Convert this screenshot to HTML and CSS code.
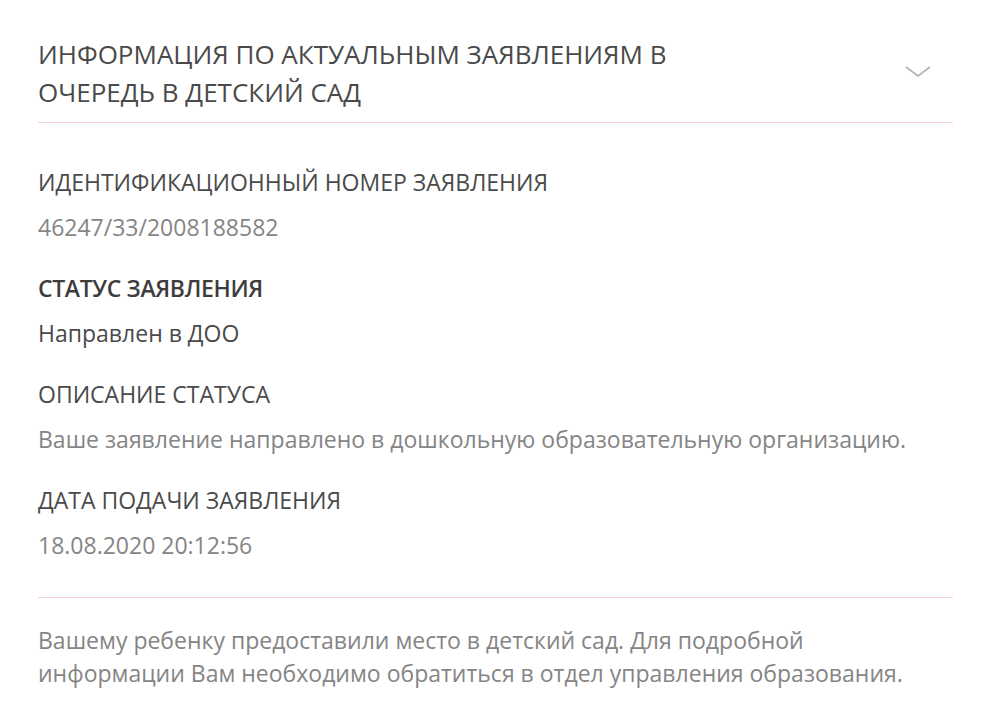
FILE: index.html
```html
<!DOCTYPE html>
<html lang="ru">
<head>
<meta charset="utf-8">
<link rel="stylesheet" href="styles.css">
</head>
<body>
<div class="card">
  <div class="header">
    <h1 class="title">ИНФОРМАЦИЯ ПО АКТУАЛЬНЫМ ЗАЯВЛЕНИЯМ В ОЧЕРЕДЬ В ДЕТСКИЙ САД</h1>
    <svg class="chevron" width="26" height="12" viewBox="0 0 26 12"><path d="M1 1 L13 10 L25 1" fill="none" stroke="#b4b4b4" stroke-width="1.6"/></svg>
  </div>
  <div class="divider"></div>
  <div class="fields">
    <div class="field">
      <div class="label">ИДЕНТИФИКАЦИОННЫЙ НОМЕР ЗАЯВЛЕНИЯ</div>
      <div class="value">46247/33/2008188582</div>
    </div>
    <div class="field">
      <div class="label strong">СТАТУС ЗАЯВЛЕНИЯ</div>
      <div class="value dark">Направлен в ДОО</div>
    </div>
    <div class="field">
      <div class="label">ОПИСАНИЕ СТАТУСА</div>
      <div class="value">Ваше заявление направлено в дошкольную образовательную организацию.</div>
    </div>
    <div class="field">
      <div class="label">ДАТА ПОДАЧИ ЗАЯВЛЕНИЯ</div>
      <div class="value">18.08.2020 20:12:56</div>
    </div>
  </div>
  <div class="divider"></div>
  <p class="note">Вашему ребенку предоставили место в детский сад. Для подробной информации Вам необходимо обратиться в отдел управления образования.</p>
</div>
</body>
</html>
```
FILE: styles.css
```css
html, body {
  margin: 0;
  padding: 0;
  background: #ffffff;
}
body {
  font-family: "Open Sans", "Noto Sans", sans-serif;
  color: #444;
}
.card {
  padding: 35px 28px 0 38px;
  width: 915px;
}
.header {
  display: flex;
  align-items: center;
  justify-content: space-between;
  padding-bottom: 11px;
}
.title {
  margin: 0;
  font-size: 26px;
  font-weight: 400;
  line-height: 38px;
  color: #4a4a4a;
  width: 700px;
}
.chevron {
  margin-right: 22px;
  margin-top: -2px;
}
.divider {
  height: 1px;
  background: #f4d2d2;
}
.fields {
  padding: 37px 0 29px;
  display: flex;
  flex-direction: column;
  gap: 16px;
}
.label {
  font-size: 23px;
  line-height: 45px;
  color: #4a4a4a;
}
.label.strong {
  font-weight: 600;
  letter-spacing: -0.35px;
  color: #3d3d3d;
}
.value {
  font-size: 23px;
  line-height: 45px;
  color: #858585;
}
.value.dark {
  color: #4a4a4a;
}
.note {
  margin: 26px 0 0;
  font-size: 23px;
  line-height: 33px;
  color: #858585;
  max-width: 880px;
}
```
